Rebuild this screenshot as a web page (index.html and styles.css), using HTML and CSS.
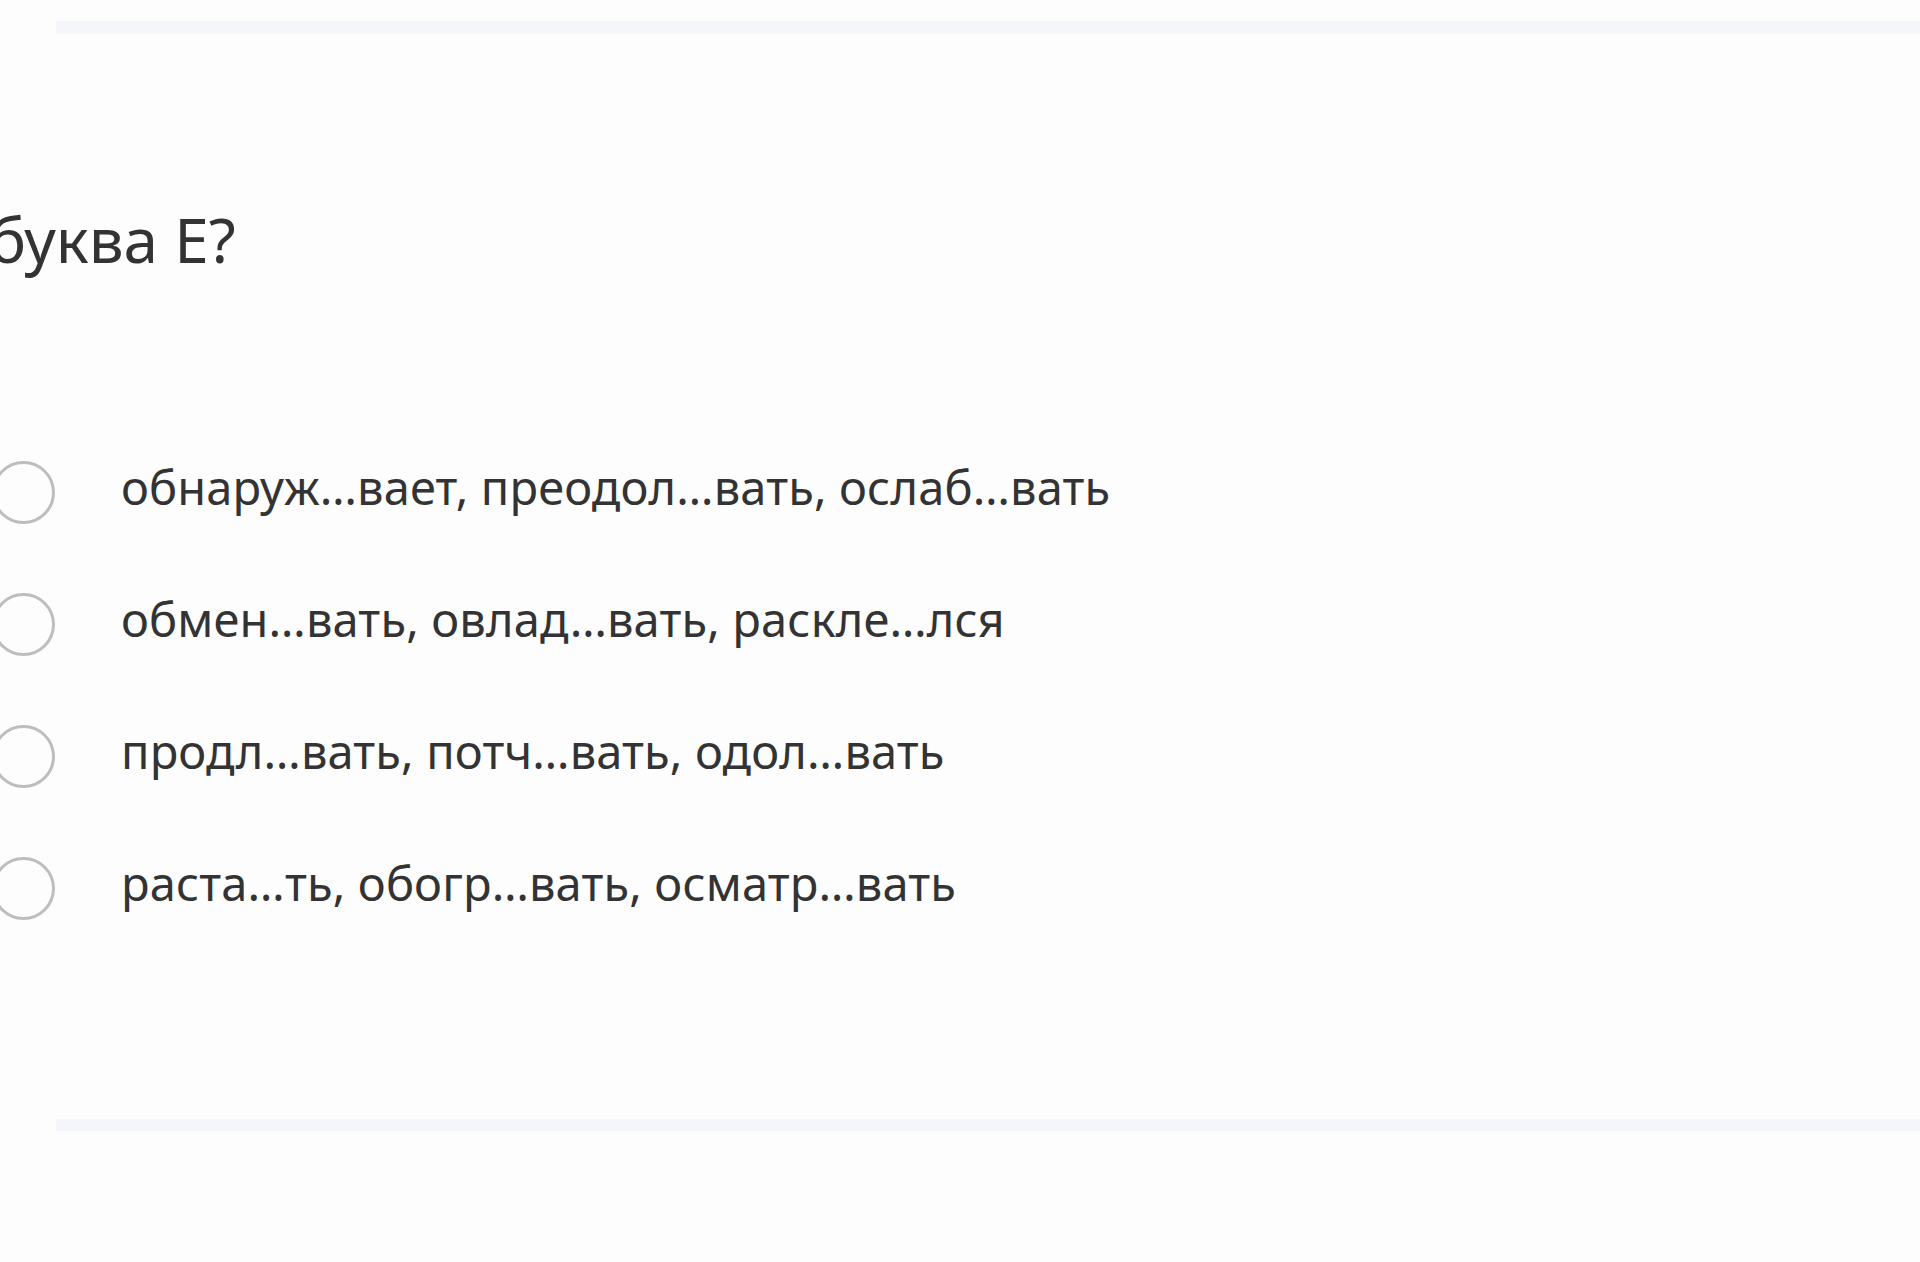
FILE: index.html
```html
<!DOCTYPE html>
<html lang="ru">
<head>
  <meta charset="UTF-8">
  <title>Вопрос</title>
  <link rel="stylesheet" href="styles.css">
</head>
<body>
  <div class="polosa"></div>

  <div class="vopros">
    <p class="tekst">буква Е?</p>

    <div class="varianty">
      <label class="variant"><span class="krug"></span><span class="otvet">обнаруж…вает, преодол…вать, ослаб…вать</span></label>
      <label class="variant"><span class="krug"></span><span class="otvet">обмен…вать, овлад…вать, раскле…лся</span></label>
      <label class="variant"><span class="krug"></span><span class="otvet">продл…вать, потч…вать, одол…вать</span></label>
      <label class="variant"><span class="krug"></span><span class="otvet">раста…ть, обогр…вать, осматр…вать</span></label>
    </div>
  </div>

  <div class="polosa nizhnyaya"></div>
</body>
</html>
```

FILE: styles.css
```css
body {
  margin: 0;
  background: #fdfdfd;
  font-family: "Noto Sans", "Open Sans", sans-serif;
  color: #333;
  overflow: hidden;
}

.polosa {
  height: 13px;
  margin: 21px 0 0 56px;
  background: #f5f6f9;
}
.nizhnyaya {
  margin-top: 165px;
  height: 12px;
}

.vopros {
  margin-left: -8px;
}

.tekst {
  margin: 168px 0 0 -3px;
  font-size: 62px;
  line-height: 74px;
}

.varianty {
  margin-top: 150px;
  display: flex;
  flex-direction: column;
}
.variant {
  height: 132px;
  display: flex;
  align-items: center;
  gap: 66px;
  cursor: pointer;
}
.krug {
  width: 57px;
  height: 57px;
  border: 3px solid #bdbdbd;
  border-radius: 50%;
  flex-shrink: 0;
}
.otvet {
  font-size: 47px;
  line-height: 60px;
  letter-spacing: 0.15px;
  padding-bottom: 11px;
}
```
